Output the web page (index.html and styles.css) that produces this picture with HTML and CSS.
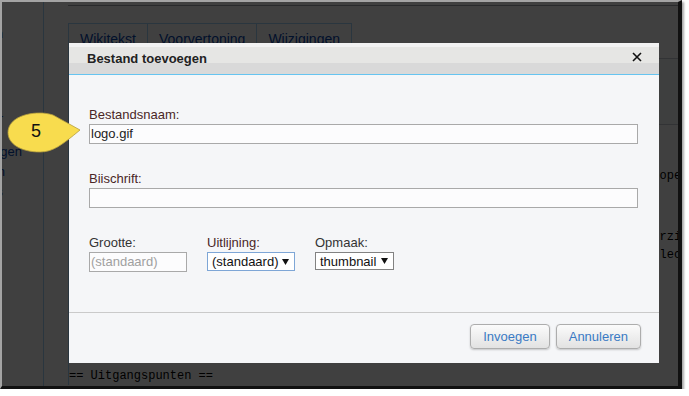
FILE: index.html
```html
<!DOCTYPE html>
<html>
<head>
  <meta charset="UTF-8">
  <title>Bestand toevoegen</title>
  <link rel="stylesheet" href="styles.css">
</head>
<body>
  <div class="screen">
    <div class="page">
      <nav class="sidebar">
        <ul>
          <li class="visited"><span>Hulp bij bewerken</span></li>
          <li class="gap"><span>Gebruiker</span></li>
          <li class="first"><span>Recente wijzigingen</span></li>
          <li class="mid"><span>Bestanden uploaden</span></li>
          <li class="head"><span>Acties</span></li>
        </ul>
      </nav>
      <main class="content">
        <div class="title-rule"></div>
        <div class="editbox">
          <div class="tabs">
            <div class="tab">Wikitekst</div>
            <div class="tab">Voorvertoning</div>
            <div class="tab">Wijzigingen</div>
          </div>
          <div class="toolbar"></div>
          <div class="editor">
            <div class="ln tail l1">openingstekst wilt wijzigen.</div>
            <div class="ln tail l2">rzicht van de wiki.</div>
            <div class="ln tail">lectie blijft bewaard.</div>
            <div class="ln l4">== Uitgangspunten ==</div>
          </div>
        </div>
      </main>
    </div>

    <div class="overlay"></div>

    <div class="dialog">
      <div class="dlg-head">
        <span class="dlg-title">Bestand toevoegen</span>
        <svg class="close" width="10" height="10" viewBox="0 0 10 10">
          <path d="M1 1 L9 9 M9 1 L1 9" stroke="#111" stroke-width="1.6" fill="none"/>
        </svg>
      </div>
      <div class="dlg-body">
        <div class="field">
          <div class="label">Bestandsnaam:</div>
          <div class="textbox">logo.gif</div>
        </div>
        <div class="field next">
          <div class="label">Biischrift:</div>
          <div class="textbox"></div>
        </div>
        <div class="row">
          <div class="col">
            <div class="label plain">Grootte:</div>
            <div class="textbox size">(standaard)</div>
          </div>
          <div class="col">
            <div class="label">Uitlijning:</div>
            <div class="select focus"><span>(standaard)</span>
              <svg width="7" height="6" viewBox="0 0 7 6"><polygon points="0,0 7,0 3.5,6" fill="#111"/></svg>
            </div>
          </div>
          <div class="col">
            <div class="label plain">Opmaak:</div>
            <div class="select"><span>thumbnail</span>
              <svg width="7" height="6" viewBox="0 0 7 6"><polygon points="0,0 7,0 3.5,6" fill="#111"/></svg>
            </div>
          </div>
        </div>
      </div>
      <div class="dlg-foot">
        <button class="btn">Invoegen</button>
        <button class="btn">Annuleren</button>
      </div>
    </div>

    <svg class="callout" width="76" height="42" viewBox="0 0 76 42">
      <path d="M73 18 L46 3 C41 1.5 37 1 33 1 C14 1 1 9 1 20.5 C1 32 14 40 33 40 C46 40 55 33 73 18 Z" fill="#f8dc4e" stroke="#b59e3c" stroke-width="0.8"/>
      <text x="29" y="25" text-anchor="middle" class="callout-num">5</text>
    </svg>
  </div>
</body>
</html>
```

FILE: styles.css
```css
body { margin: 0; background: #fff; font-family: "Liberation Sans", Arial, sans-serif; }

.screen { position: relative; width: 676px; height: 384px; overflow: hidden; background: #fff;
  border-top: 2px solid #a4a4a4; border-left: 2px solid #a4a4a4; border-right: 4px solid #111; border-bottom: 3px solid #111;
  box-shadow: 2px 2px 2px #a8a8a8; }

.page { display: flex; height: 100%; }

/* page under the modal */
.sidebar { width: 41px; flex: none; border-right: 1px solid #a7d7f9; overflow: hidden; padding-top: 22px; font-size: 13px; }
.sidebar ul { list-style: none; margin: 0; padding: 0; }
.sidebar li { display: flex; justify-content: flex-end; white-space: nowrap; height: 20px; line-height: 20px; padding-right: 40px; color: #0645ad; }
.sidebar li.visited { color: #0b0080; }
.sidebar li.gap { margin-top: 65px; }
.sidebar li.first { margin-top: 13px; padding-right: 21px; }
.sidebar li.mid { padding-right: 38px; }
.sidebar li.head { color: #72777d; }

.content { flex: 1; min-width: 0; padding-left: 24px; }
.title-rule { margin-top: 3px; border-top: 1px solid #a2a9b1; }
.editbox { margin-top: 17px; border-left: 1px solid #a7d7f9; }
.tabs { display: flex; height: 35px; border-bottom: 1px solid #c8ccd1; }
.tab { border-top: 1px solid #a7d7f9; border-right: 1px solid #a7d7f9; padding: 7px 11px 0; font-size: 14px; color: #0645ad; }
.toolbar { height: 65px; border-bottom: 1px solid #c8ccd1; background: #f8f9fa; }
.editor { font-family: "Liberation Mono", monospace; font-size: 12px; line-height: 18px; color: #000; overflow: hidden; }
.ln { height: 18px; white-space: pre; }
.ln.tail { padding-left: 82ch; }
.l1 { margin-top: 42px; }
.l2 { margin-top: 43px; }
.l4 { margin-top: 103px; }

.overlay { position: absolute; inset: 0; background: rgba(0, 0, 0, 0.75); }

/* modal */
.dialog { position: absolute; left: 67px; top: 41px; width: 590px; height: 320px; background: #f5f6f8; display: flex; flex-direction: column; }
.dlg-head { height: 31px; flex: none; border-bottom: 1px solid #66c4f0; display: flex; align-items: center; justify-content: space-between; padding: 0 17px 0 18px;
  background: linear-gradient(#f2f2f2 0, #f2f2f2 4px, #e6e6e4 4px, #e6e6e4 20px, #d9d9d9 20px); }
.dlg-title { font-size: 13px; font-weight: bold; color: #222; }
.close { margin-top: -3px; }

.dlg-body { flex: 1; padding: 32px 21px 0 20px; font-size: 13px; }
.label { line-height: 15px; margin-bottom: 2px; color: #4a2626; }
.label.plain { color: #333; }
.textbox { box-sizing: border-box; height: 20px; border: 1px solid #a9a9a9; background: #fcfcfd; padding: 0 1px; line-height: 18px; color: #222; }
.field.next { margin-top: 27px; }
.row { display: flex; gap: 20px; margin-top: 27px; }
.textbox.size { width: 98px; color: #a0a0a0; }
.select { box-sizing: border-box; width: 88px; height: 19px; display: flex; align-items: center; justify-content: space-between; padding: 0 5px 0 4px;
  border: 1px solid #828282; background: #fff; color: #111; }
.select.focus { border-color: #7ea6d6; }
.select:not(.focus) { width: 79px; height: 18px; }

.dlg-foot { box-sizing: border-box; height: 51px; flex: none; border-top: 1px solid #cacaca; display: flex; justify-content: flex-end; align-items: flex-start; gap: 6px; padding: 11px 18px 0 0; }
.btn { height: 25px; padding: 0 12px; border: 1px solid #adadad; border-radius: 4px; background: linear-gradient(#fbfbfb, #e2e2e2);
  color: #3a7ac4; font: 13px "Liberation Sans", Arial, sans-serif; box-shadow: 0 1px 2px rgba(0, 0, 0, 0.2); }

.callout { position: absolute; left: 5px; top: 110px; }
.callout-num { font: 18px "Liberation Sans", Arial, sans-serif; fill: #111; }
```
